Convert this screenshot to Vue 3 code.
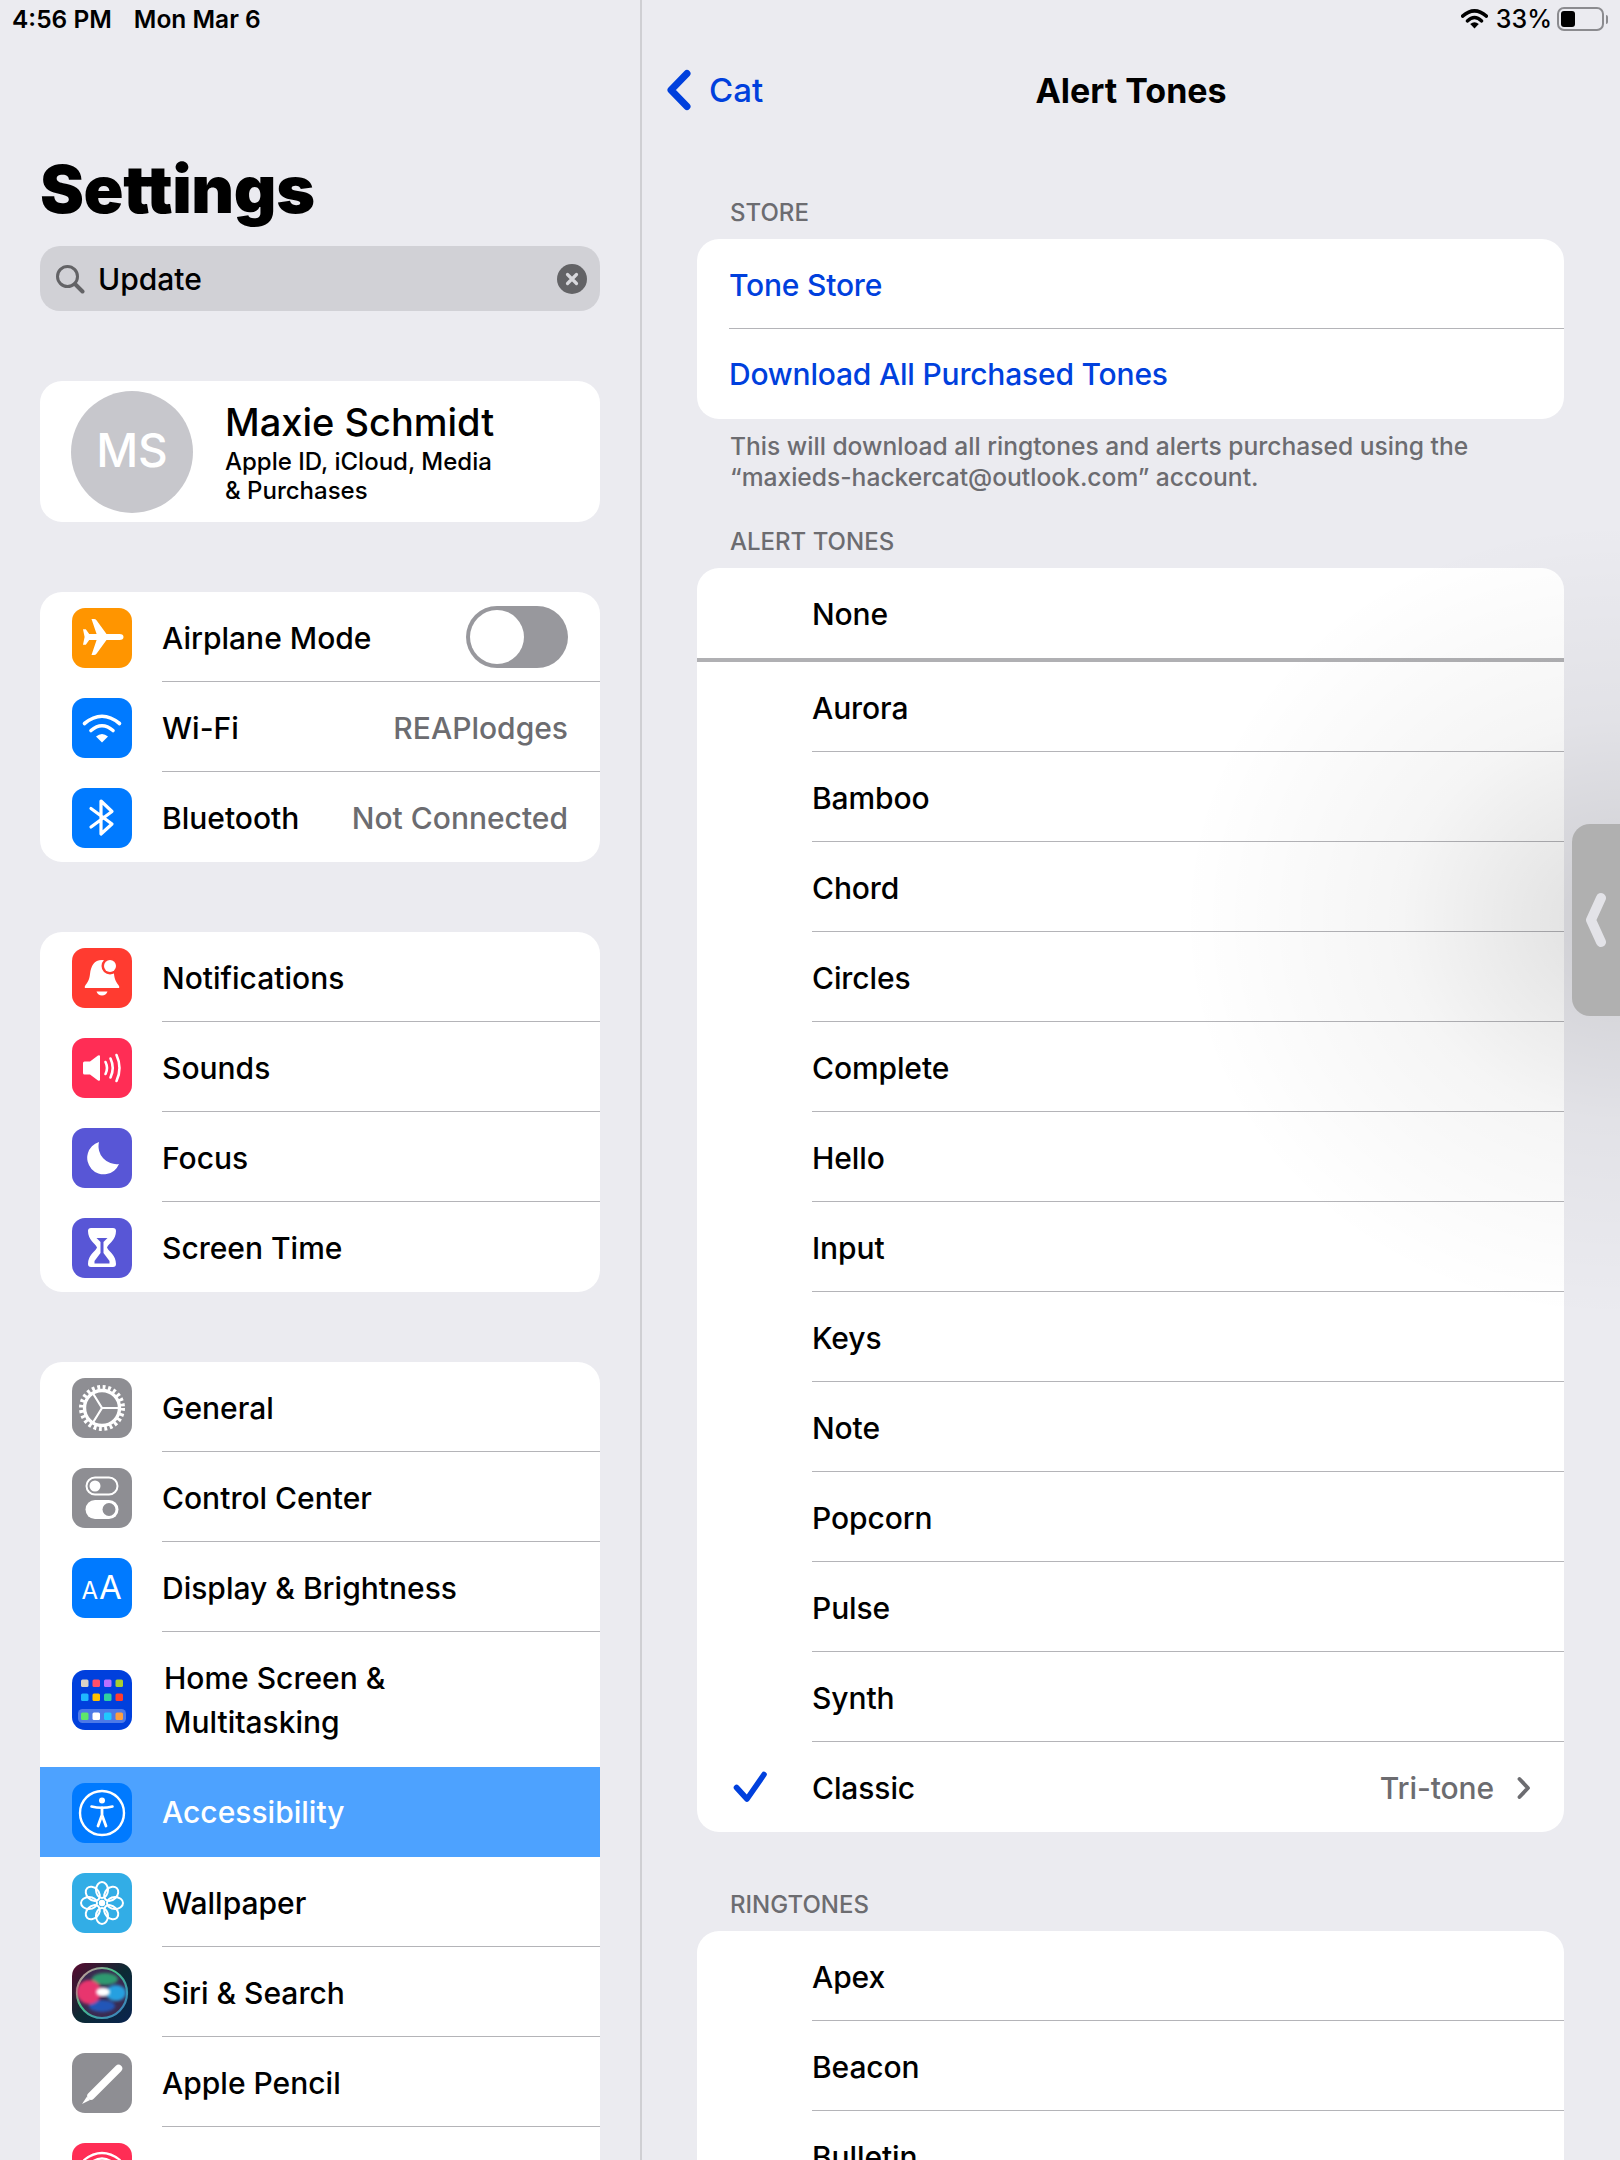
<template>
  <div class="ipad">
    <aside class="sidebar">
      <div class="status-left">
        <span>4:56 PM</span>
        <span>Mon Mar 6</span>
      </div>
      <h1 class="big-title">Settings</h1>
      <div class="search">
        <svg class="search-icon" viewBox="0 0 30 30" width="30" height="30">
          <circle cx="12.5" cy="12.5" r="10" fill="none" stroke="#636366" stroke-width="3" />
          <path d="M20 20l7.5 7.5" stroke="#636366" stroke-width="4" stroke-linecap="round" />
        </svg>
        <span class="search-text">Update</span>
        <span class="search-clear">
          <svg viewBox="0 0 30 30" width="30" height="30">
            <path d="M10.5 10.5l9 9M19.5 10.5l-9 9" stroke="#d8d8dc" stroke-width="3.2" stroke-linecap="round" />
          </svg>
        </span>
      </div>

      <div class="card profile">
        <div class="avatar">MS</div>
        <div class="profile-text">
          <div class="profile-name">Maxie Schmidt</div>
          <div class="profile-sub">Apple ID, iCloud, Media<br />&amp; Purchases</div>
        </div>
      </div>

      <div class="card side-group" v-for="(group, g) in groups" :key="g">
        <div
          class="side-row"
          v-for="row in group"
          :key="row.label"
          :class="{ active: row.active, tall: row.tall }"
        >
          <svg class="app-icon" :class="`ic-${row.icon}`" viewBox="0 0 60 60" width="60" height="60">
            <template v-if="row.icon === 'plane'">
              <path fill="#fff" d="M47.5 26H34.5L24.5 12.2Q23.6 11 22 11H19.5L24.6 26H17.2L13.8 21.2H11L12.6 29L11 36.8H13.8L17.2 32H24.6L19.5 47H22Q23.6 47 24.5 45.8L34.5 32H47.5Q51.5 32 51.5 29Q51.5 26 47.5 26Z" />
            </template>
            <template v-else-if="row.icon === 'wifi'">
              <path d="M12.5 25.5Q30 11 47.5 25.5" fill="none" stroke="#fff" stroke-width="3.6" stroke-linecap="round" />
              <path d="M19 32.5Q30 23 41 32.5" fill="none" stroke="#fff" stroke-width="3.6" stroke-linecap="round" />
              <path d="M30 44.5L24 38.5Q30 33.5 36 38.5Z" fill="#fff" />
            </template>
            <template v-else-if="row.icon === 'bt'">
              <path d="M19 20.5L40 36L29 46V13L40 23.5L19 39" fill="none" stroke="#fff" stroke-width="3.2" stroke-linecap="round" stroke-linejoin="round" />
            </template>
            <template v-else-if="row.icon === 'bell'">
              <path fill="#fff" d="M30 12C22 12 19 18 18 26C17.5 32 15 35 13 38Q12 40 14 40H46Q48 40 47 38C45 35 42.5 32 42 26C41 18 38 12 30 12Z" />
              <path fill="#fff" d="M24.5 43.5H35.5Q34 47.5 30 47.5Q26 47.5 24.5 43.5Z" />
              <circle cx="38" cy="18" r="8.5" fill="#ff3b30" />
              <circle cx="38" cy="18" r="6" fill="#fff" />
            </template>
            <template v-else-if="row.icon === 'sound'">
              <path fill="#fff" d="M12.5 23.5H18L26 17.5Q28 16.5 28 18.5V41.5Q28 43.5 26 42.5L18 36.5H12.5Q11 36.5 11 35V25Q11 23.5 12.5 23.5Z" />
              <path d="M33.5 24Q36.5 30 33.5 36M38.5 20.5Q43 30 38.5 39.5M44.5 17Q50.5 30 44.5 43" fill="none" stroke="#fff" stroke-width="2.6" stroke-linecap="round" />
            </template>
            <template v-else-if="row.icon === 'moon'">
              <path fill="#fff" d="M27 14A16.5 16.5 0 1 0 47 36A18 18 0 0 1 27 14Z" />
            </template>
            <template v-else-if="row.icon === 'hour'">
              <path fill="#fff" d="M19 10H41Q44 10 44 13C44 22 37 25 35 29.5C37 34 44 37 44 46Q44 49 41 49H19Q16 49 16 46C16 37 23 34 25 29.5C23 25 16 22 16 13Q16 10 19 10Z" />
              <path fill="#5856d6" d="M24.5 20H35.5L31.5 24V35L37.5 43V45.5H22.5V43L28.5 35V24Z" />
            </template>
            <template v-else-if="row.icon === 'gear'">
              <circle cx="30" cy="30" r="20.5" fill="none" stroke="#fff" stroke-width="5" stroke-dasharray="2.8 2.57" />
              <circle cx="30" cy="30" r="17.5" fill="none" stroke="#fff" stroke-width="3.4" />
              <path d="M30 30H47M30 30L21 15.5M30 30L21 44.5" stroke="#fff" stroke-width="2.2" />
            </template>
            <template v-else-if="row.icon === 'control'">
              <rect x="14.5" y="9.5" width="31" height="17" rx="8.5" fill="none" stroke="#fff" stroke-width="2" />
              <circle cx="23" cy="18" r="5.5" fill="#fff" />
              <rect x="13.5" y="32" width="33" height="19" rx="9.5" fill="#fff" />
              <circle cx="37" cy="41.5" r="6.5" fill="#8e8e93" />
            </template>
            <template v-else-if="row.icon === 'display'">
              <text x="9.5" y="41" class="aa-small">A</text>
              <text x="27" y="41" class="aa-big">A</text>
            </template>
            <template v-else-if="row.icon === 'home'">
              <rect x="6" y="39" width="48" height="14" rx="4.5" fill="#fff" opacity="0.3" />
              <rect
                v-for="d in homeDots"
                :key="d.x + '-' + d.y"
                :x="d.x"
                :y="d.y"
                width="7.5"
                height="7.5"
                rx="1.5"
                :fill="d.c"
              />
            </template>
            <template v-else-if="row.icon === 'access'">
              <circle cx="30" cy="30" r="22" fill="none" stroke="#fff" stroke-width="2.4" />
              <circle cx="30" cy="17.5" r="3" fill="#fff" />
              <path d="M19.5 23.5Q30 26 40.5 23.5" fill="none" stroke="#fff" stroke-width="2.6" stroke-linecap="round" />
              <path d="M30 25V32L26 43M30 32L34 43" fill="none" stroke="#fff" stroke-width="2.8" stroke-linecap="round" stroke-linejoin="round" />
            </template>
            <template v-else-if="row.icon === 'wall'">
              <ellipse
                v-for="a in petals"
                :key="a"
                cx="30"
                cy="17"
                rx="6"
                ry="8"
                fill="none"
                stroke="#fff"
                stroke-width="2"
                :transform="`rotate(${a} 30 30)`"
              />
              <circle cx="30" cy="30" r="3.2" fill="#fff" />
            </template>
            <template v-else-if="row.icon === 'siri'">
              <defs>
                <linearGradient id="siriBg" x1="0" y1="0" x2="1" y2="1">
                  <stop offset="0" stop-color="#5a0a30" />
                  <stop offset="0.5" stop-color="#0c2a33" />
                  <stop offset="1" stop-color="#0a2450" />
                </linearGradient>
                <linearGradient id="siriRing" x1="0" y1="0" x2="1" y2="1">
                  <stop offset="0" stop-color="#e88aa0" />
                  <stop offset="0.4" stop-color="#45c088" />
                  <stop offset="1" stop-color="#3a78c8" />
                </linearGradient>
                <filter id="siriBlur"><feGaussianBlur stdDeviation="1.6" /></filter>
              </defs>
              <rect width="60" height="60" fill="url(#siriBg)" />
              <circle cx="30" cy="30" r="25" fill="#3a2a50" stroke="url(#siriRing)" stroke-width="2.2" />
              <g filter="url(#siriBlur)">
                <ellipse cx="33" cy="16" rx="13" ry="6" fill="#2f9a70" />
                <ellipse cx="30" cy="43" rx="13" ry="6" fill="#2456b8" />
                <ellipse cx="17" cy="29" rx="12" ry="12" fill="#e8356e" />
                <ellipse cx="44" cy="30" rx="10" ry="8" fill="#28a0e0" />
              </g>
              <ellipse cx="31" cy="29" rx="7" ry="4.5" fill="#fff" filter="url(#siriBlur)" />
            </template>
            <template v-else-if="row.icon === 'pencil'">
              <path d="M46.5 15.5L19 43" stroke="#fff" stroke-width="7.5" stroke-linecap="round" />
              <path d="M10 51L15 43.5L18 47Z" fill="#fff" />
            </template>
            <template v-else-if="row.icon === 'touch'">
              <path d="M12 17Q30 3 48 17M17 21Q30 10 43 21M22 24Q30 17 38 24" fill="none" stroke="#fff" stroke-width="2.2" stroke-linecap="round" />
            </template>
          </svg>
          <div class="side-body">
            <span class="side-label">{{ row.label }}</span>
            <span v-if="row.value" class="side-value">{{ row.value }}</span>
            <span v-if="row.toggle" class="toggle"><span class="knob"></span></span>
          </div>
        </div>
      </div>
    </aside>

    <main class="detail">
      <div class="status-right">
        <svg viewBox="0 0 28 21" width="27" height="20">
          <path d="M1.5 7.5Q14-3.5 26.5 7.5" fill="none" stroke="#000" stroke-width="3.6" stroke-linecap="round" />
          <path d="M6.5 12.5Q14 5.5 21.5 12.5" fill="none" stroke="#000" stroke-width="3.6" stroke-linecap="round" />
          <path d="M14 20.5L9.5 15.8Q14 12.2 18.5 15.8Z" fill="#000" />
        </svg>
        <span class="pct">33%</span>
        <span class="battery"><span class="battery-fill"></span></span>
        <span class="battery-cap"></span>
      </div>

      <div class="nav">
        <span class="back">
          <svg viewBox="0 0 26 42" width="26" height="42">
            <path d="M21 4.5L5 21L21 37.5" fill="none" stroke="#0040dd" stroke-width="7" stroke-linecap="round" stroke-linejoin="round" />
          </svg>
          <span>Cat</span>
        </span>
        <span class="nav-title">Alert Tones</span>
      </div>

      <div class="sec-label first">STORE</div>
      <div class="card">
        <div class="link-row"><div class="link-body">Tone Store</div></div>
        <div class="link-row"><div class="link-body">Download All Purchased Tones</div></div>
      </div>
      <p class="sec-foot">
        This will download all ringtones and alerts purchased using the<br />
        “maxieds-hackercat@outlook.com” account.
      </p>

      <div class="sec-label">ALERT TONES</div>
      <div class="card">
        <div class="tone none-row"><div class="tone-body">None</div></div>
        <div class="none-rule"></div>
        <div class="tone" v-for="t in alertTones" :key="t">
          <div class="tone-body">{{ t }}</div>
        </div>
        <div class="tone">
          <svg class="check" viewBox="0 0 34 32" width="34" height="32">
            <path d="M3.5 16.5L14 28L31 3.5" fill="none" stroke="#0040dd" stroke-width="5.6" stroke-linecap="round" stroke-linejoin="round" />
          </svg>
          <div class="tone-body">
            <span>Classic</span>
            <span class="tone-value">Tri-tone</span>
            <svg class="chev" viewBox="0 0 16 24" width="16" height="24">
              <path d="M3.5 3L12 12L3.5 21" fill="none" stroke="#6c6c70" stroke-width="3.8" stroke-linecap="round" stroke-linejoin="round" />
            </svg>
          </div>
        </div>
      </div>

      <div class="sec-label ring">RINGTONES</div>
      <div class="card">
        <div class="tone" v-for="t in ringtones" :key="t">
          <div class="tone-body">{{ t }}</div>
        </div>
      </div>
    </main>

    <div class="edge-shadow"></div>
    <div class="handle">
      <svg viewBox="0 0 22 56" width="22" height="56">
        <path d="M16 6L6 28L16 50" fill="none" stroke="#e3e3e8" stroke-width="10" stroke-linecap="round" stroke-linejoin="round" />
      </svg>
    </div>
  </div>
</template>

<script setup>
const groups = [
  [
    { icon: 'plane', label: 'Airplane Mode', toggle: true },
    { icon: 'wifi', label: 'Wi-Fi', value: 'REAPlodges' },
    { icon: 'bt', label: 'Bluetooth', value: 'Not Connected' }
  ],
  [
    { icon: 'bell', label: 'Notifications' },
    { icon: 'sound', label: 'Sounds' },
    { icon: 'moon', label: 'Focus' },
    { icon: 'hour', label: 'Screen Time' }
  ],
  [
    { icon: 'gear', label: 'General' },
    { icon: 'control', label: 'Control Center' },
    { icon: 'display', label: 'Display & Brightness' },
    { icon: 'home', label: 'Home Screen & Multitasking', tall: true },
    { icon: 'access', label: 'Accessibility', active: true },
    { icon: 'wall', label: 'Wallpaper' },
    { icon: 'siri', label: 'Siri & Search' },
    { icon: 'pencil', label: 'Apple Pencil' },
    { icon: 'touch', label: 'Touch ID & Passcode' }
  ]
]

const dotX = [9, 20.5, 32, 43.5]
const dotRows = [
  { y: 9.5, colors: ['#d9d3c7', '#ff4f6a', '#b870ff', '#a8d030'] },
  { y: 23.5, colors: ['#1fb8ff', '#ffc000', '#30d0a0', '#ff3b30'] },
  { y: 42.5, colors: ['#5ee86a', '#ffffff', '#20c8ff', '#ff9f40'] }
]
const homeDots = dotRows.flatMap(r => r.colors.map((c, i) => ({ x: dotX[i], y: r.y, c })))

const petals = [0, 45, 90, 135, 180, 225, 270, 315]

const alertTones = [
  'Aurora', 'Bamboo', 'Chord', 'Circles', 'Complete', 'Hello',
  'Input', 'Keys', 'Note', 'Popcorn', 'Pulse', 'Synth'
]
const ringtones = ['Apex', 'Beacon', 'Bulletin']
</script>

<style>
html,
body {
  margin: 0;
  height: 2160px;
  overflow: hidden;
  background: #ebebf0;
}
</style>

<style scoped>
.ipad {
  position: relative;
  display: flex;
  width: 1620px;
  height: 2160px;
  overflow: hidden;
  background: #ebebf0;
  color: #000;
  font-family: Inter, "Noto Sans", sans-serif;
  font-weight: 500;
}

.card {
  background: #fff;
  border-radius: 22px;
  overflow: hidden;
}

/* left column */
.sidebar {
  flex: none;
  width: 560px;
  padding: 0 40px;
  border-right: 2px solid #cfcfd3;
}

.status-left {
  display: flex;
  gap: 22px;
  height: 38px;
  margin-left: -28px;
  font-size: 24.5px;
  line-height: 38px;
  font-weight: 600;
}

.big-title {
  height: 78px;
  margin: 112px 0 0;
  font-size: 66px;
  line-height: 78px;
  font-weight: 900;
  letter-spacing: -0.4px;
}

.search {
  display: flex;
  align-items: center;
  height: 65px;
  margin-top: 18px;
  border-radius: 20px;
  background: #d1d1d6;
  padding: 0 13px 0 15px;
}

.search-icon {
  flex: none;
}

.search-text {
  flex: 1;
  margin-left: 13px;
  font-size: 30px;
}

.search-clear {
  width: 30px;
  height: 30px;
  border-radius: 50%;
  background: #636366;
}

.profile {
  display: flex;
  align-items: center;
  height: 141px;
  margin-top: 70px;
  padding-left: 31px;
}

.avatar {
  width: 122px;
  height: 122px;
  border-radius: 50%;
  background: #c7c7cc;
  color: #fff;
  font-size: 46px;
  line-height: 119px;
  text-align: center;
}

.profile-text {
  margin-left: 32px;
}

.profile-name {
  font-size: 38px;
  line-height: 46px;
  margin-bottom: 2px;
}

.profile-sub {
  font-size: 24px;
  line-height: 29px;
}

.side-group {
  margin-top: 70px;
}

.side-row {
  display: flex;
  align-items: center;
  height: 90px;
  padding-left: 32px;
}

.side-row.tall {
  height: 135px;
}

.side-row.active {
  background: #4da2ff;
  color: #fff;
}

.app-icon {
  flex: none;
  margin: 1px 30px 0 0;
  border-radius: 13px;
}

.ic-plane { background: #ff9500; }
.ic-wifi, .ic-bt, .ic-display, .ic-access { background: #007aff; }
.ic-bell { background: #ff3b30; }
.ic-sound, .ic-touch { background: #ff2d55; }
.ic-moon, .ic-hour { background: #5856d6; }
.ic-gear, .ic-control, .ic-pencil { background: #8e8e93; }
.ic-home { background: #0040dd; }
.ic-wall { background: #32ade6; }

.aa-small,
.aa-big {
  fill: #fff;
  font-family: Inter, sans-serif;
  font-weight: 400;
}

.aa-small { font-size: 24px; }
.aa-big { font-size: 33px; }

.side-body {
  flex: 1;
  align-self: stretch;
  display: flex;
  align-items: center;
  justify-content: space-between;
  padding: 2px 32px 0 0;
  font-size: 30px;
  border-bottom: 1px solid #b4b4b8;
}

.side-row:last-child .side-body,
.side-row.active .side-body,
.side-row.tall .side-body {
  border-bottom: none;
}

.side-row.tall .side-body,
.side-row.active .side-body {
  padding-top: 0;
}

.side-row.tall .side-label {
  width: 300px;
  margin-left: 2px;
  line-height: 44px;
}

.side-value {
  color: #6c6c70;
}

.toggle {
  position: relative;
  width: 102px;
  height: 62px;
  margin-top: -2px;
  border-radius: 31px;
  background: #98989d;
}

.knob {
  position: absolute;
  left: 4px;
  top: 4px;
  width: 54px;
  height: 54px;
  border-radius: 50%;
  background: #fff;
}

/* right column */
.detail {
  flex: 1;
  padding: 0 56px 0 55px;
}

.status-right {
  display: flex;
  align-items: center;
  justify-content: flex-end;
  height: 38px;
  margin-right: -44px;
}

.pct {
  margin-left: 9px;
  font-size: 25px;
  line-height: 38px;
}

.status-right svg {
  margin-right: 1px;
  transform: translateX(2px);
}

.battery {
  display: block;
  box-sizing: border-box;
  width: 47px;
  height: 24px;
  margin-left: 5px;
  padding: 2px;
  border: 2px solid #8b8b8f;
  border-radius: 7px;
}

.battery-fill {
  display: block;
  width: 14px;
  height: 100%;
  border-radius: 3px;
  background: #000;
}

.battery-cap {
  width: 2px;
  height: 9px;
  margin-left: 2px;
  border-radius: 0 2px 2px 0;
  background: #8b8b8f;
}

.nav {
  position: relative;
  display: flex;
  align-items: center;
  justify-content: center;
  height: 104px;
  margin: 0 -32px 0 -31px;
}

.back {
  position: absolute;
  left: 0;
  top: 31px;
  display: flex;
  align-items: center;
  gap: 17px;
  color: #0040dd;
  font-size: 33px;
}

.nav-title {
  font-size: 34px;
  font-weight: 700;
}

.sec-label {
  margin: 34px 0 11px 33px;
  font-size: 24px;
  line-height: 30px;
  color: #6c6c70;
}

.sec-label.first {
  margin-top: 56px;
}

.sec-label.ring {
  margin-top: 58px;
}

.sec-foot {
  margin: 12px 0 0 33px;
  font-size: 24.6px;
  line-height: 31px;
  color: #6c6c70;
}

.link-row {
  height: 90px;
  padding-left: 32px;
  color: #0040dd;
  font-size: 30px;
  letter-spacing: -0.2px;
}

.link-body {
  display: flex;
  align-items: center;
  height: 100%;
  box-sizing: border-box;
  padding-top: 2px;
  border-bottom: 1px solid #b4b4b8;
}

.link-row:last-child .link-body {
  padding-top: 0;
  border-bottom: none;
}

.tone {
  position: relative;
  height: 90px;
  padding-left: 115px;
  font-size: 30px;
  letter-spacing: -0.1px;
}

.none-rule {
  height: 4px;
  background: #b0b0b3;
}

.tone-body {
  display: flex;
  align-items: center;
  height: 100%;
  box-sizing: border-box;
  padding-top: 2px;
  border-bottom: 1px solid #b4b4b8;
}

.none-row .tone-body,
.tone:last-child .tone-body {
  border-bottom: none;
}

.check {
  position: absolute;
  left: 36px;
  top: 29px;
}

.tone-value {
  margin-left: auto;
  color: #6c6c70;
}

.chev {
  margin: 0 32px 0 22px;
}

/* swipe handle and its shadow lie over the page */
.edge-shadow {
  position: absolute;
  left: 1180px;
  top: 520px;
  width: 880px;
  height: 800px;
  background: radial-gradient(ellipse 50% 50% at 50% 50%, rgba(0, 0, 0, 0.13), rgba(0, 0, 0, 0.1) 15%, rgba(0, 0, 0, 0.04) 50%, rgba(0, 0, 0, 0) 100%);
  pointer-events: none;
}

.handle {
  position: absolute;
  left: 1572px;
  top: 824px;
  width: 48px;
  height: 192px;
  border-radius: 18px 0 0 18px;
  background: #b0b0b0;
}

.handle svg {
  position: absolute;
  left: 13px;
  top: 68px;
}
</style>
